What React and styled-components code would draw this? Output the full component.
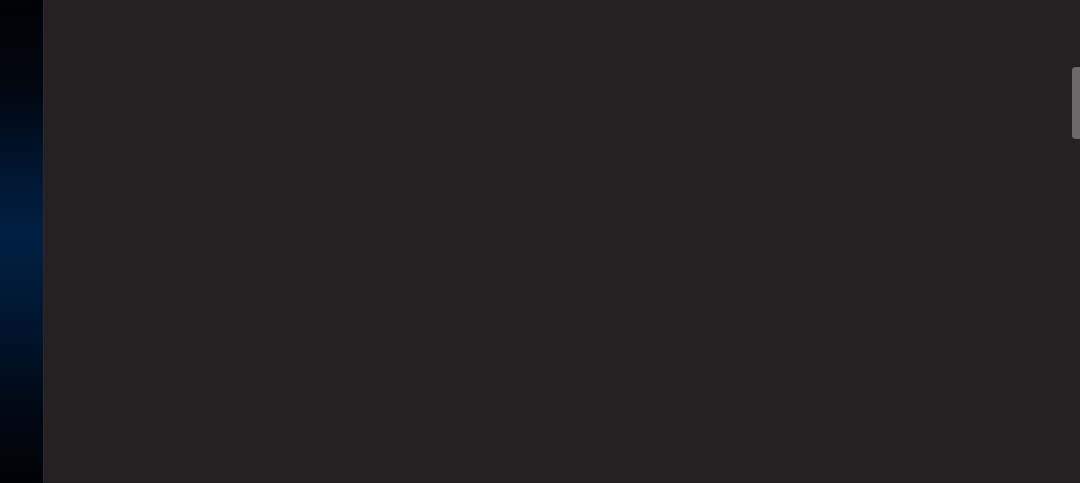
import React from 'react'
import styled, { createGlobalStyle } from 'styled-components'

const GlobalStyle = createGlobalStyle`
  html, body, #root {
    margin: 0;
    padding: 0;
    height: 100%;
    overflow: hidden;
    background: #000;
    font-family: "Liberation Sans", Arial, sans-serif;
  }
`

const Screen = styled.div`
  display: flex;
  height: 483px;
  width: 1080px;
`

const Backdrop = styled.div`
  width: 43px;
  flex-shrink: 0;
  background: linear-gradient(
    to bottom,
    #010206 0%,
    #01060f 18%,
    #001630 36%,
    #001f42 48%,
    #001c3b 56%,
    #00132a 70%,
    #010812 86%,
    #010206 100%
  );
`

const Panel = styled.div`
  position: relative;
  flex: 1;
  background: #252122;
  border-left: 1px solid #2e2a2b;
  border-bottom: 1px solid #1f1c1d;
`

const ScrollThumb = styled.div`
  position: absolute;
  right: 0;
  top: 67px;
  width: 8px;
  height: 72px;
  background: #6a6869;
  border-radius: 4px 0 0 4px;
`

const App = () => {
  return (
    <>
      <GlobalStyle />
      <Screen>
        <Backdrop />
        <Panel>
          <ScrollThumb />
        </Panel>
      </Screen>
    </>
  )
}

export default App
